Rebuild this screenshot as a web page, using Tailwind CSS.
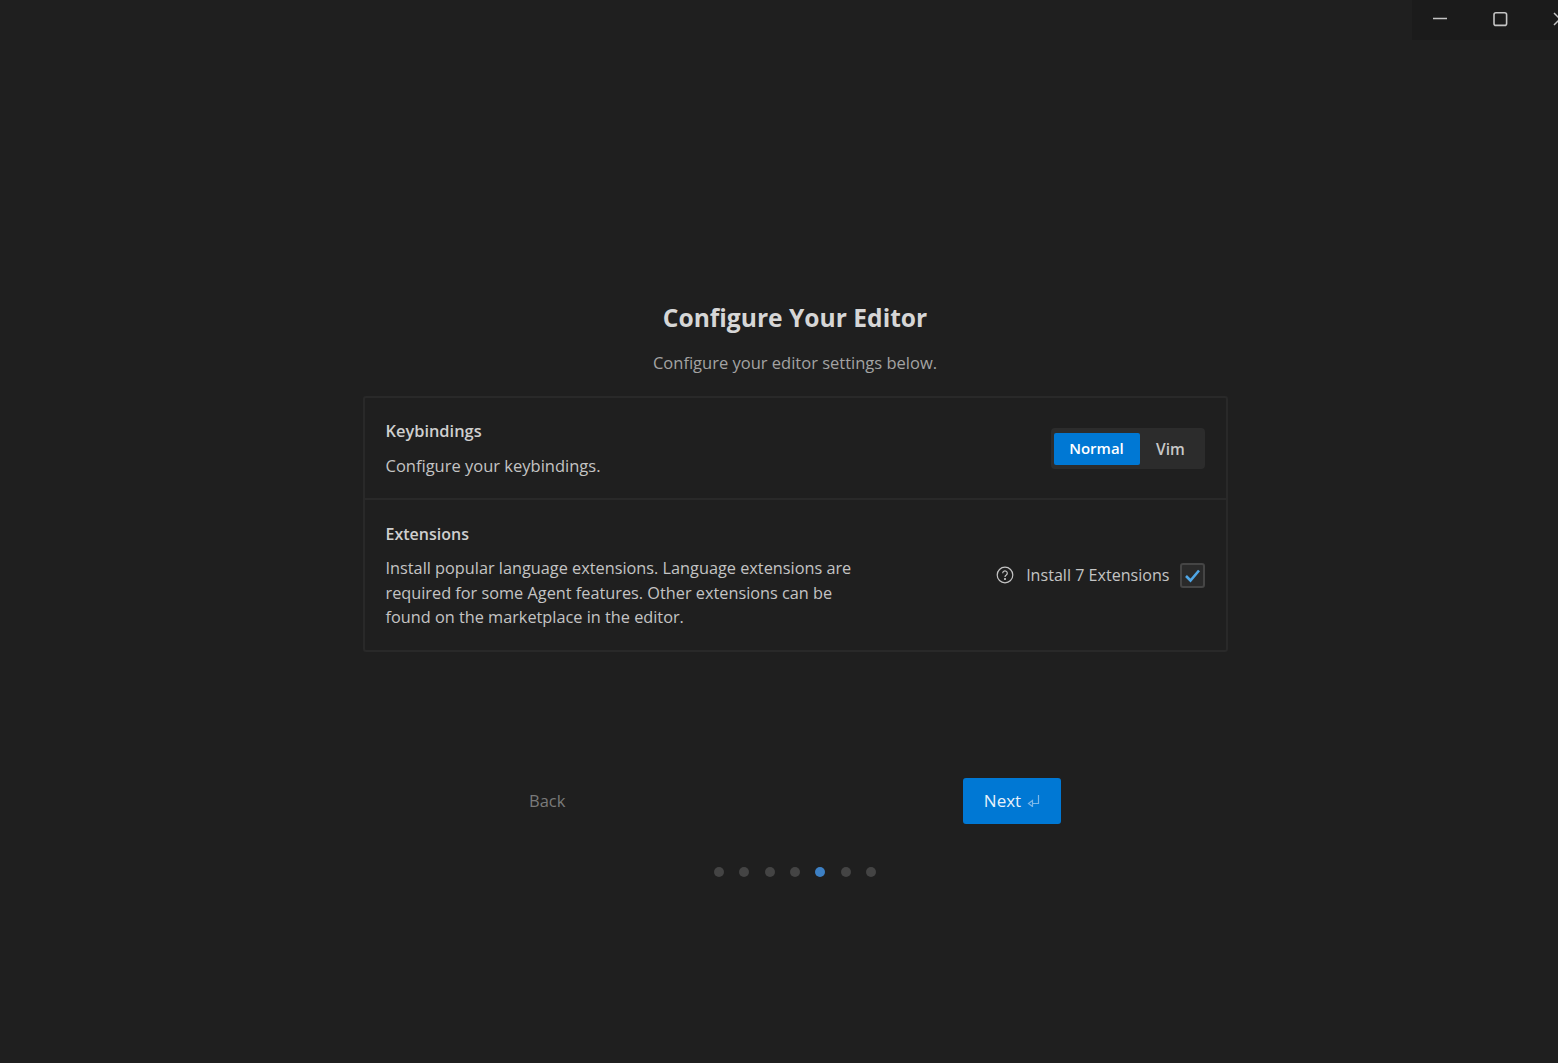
<!DOCTYPE html>
<html lang="en">
<head>
  <meta charset="UTF-8" />
  <meta name="viewport" content="width=device-width, initial-scale=1" />
  <title>Configure Your Editor</title>
  <script src="https://cdn.jsdelivr.net/npm/@tailwindcss/browser@4"></script>
</head>
<body class="relative h-[1063px] overflow-hidden bg-[#1f1f1f] font-['Open_Sans',sans-serif] text-[#cccccc]">
  <!-- Window controls -->
  <div class="absolute top-0 right-0 flex h-[40px] w-[146px] bg-[#1b1b1b] overflow-hidden">
    <svg class="absolute left-[20px] top-[11px]" width="16" height="16" viewBox="0 0 16 16" fill="none" stroke="#c4c4c4" stroke-width="1.5"><path d="M1 7.5h14"/></svg>
    <svg class="absolute left-[80px] top-[11px]" width="16" height="16" viewBox="0 0 16 16" fill="none" stroke="#c4c4c4" stroke-width="1.6"><rect x="2" y="1.8" width="12.6" height="12.6" rx="2"/></svg>
    <svg class="absolute left-[140px] top-[11px]" width="16" height="16" viewBox="0 0 16 16" fill="none" stroke="#c4c4c4" stroke-width="1.5"><path d="M2 2l12 12M14 2L2 14"/></svg>
  </div>

  <main class="flex w-[1590px] flex-col items-center pt-[300px]">
    <h1 class="text-[24.6px] leading-[36px] font-bold text-[#d6d6d6]">Configure Your Editor</h1>
    <p class="mt-[17px] text-[16.5px] leading-[20px] text-[#a3a3a3]">Configure your editor settings below.</p>

    <!-- Settings card -->
    <section class="mt-[23px] w-[865px] rounded-[3px] border-2 border-[#292929]">
      <div class="flex h-[102px] items-center justify-between border-b-2 border-[#292929] px-[21px] pt-[1px]">
        <div>
          <h2 class="text-[16.4px] leading-[22px] font-semibold text-[#cfcfcf]">Keybindings</h2>
          <p class="mt-[12px] text-[16.5px] leading-[24px] text-[#c4c4c4]">Configure your keybindings.</p>
        </div>
        <div class="flex h-[41px] w-[154px] items-center rounded-[4px] bg-[#2c2c2c] pl-[3px]">
          <button class="h-[32px] w-[86px] rounded-[2px] bg-[#0078d4] text-[15px] font-semibold text-white">Normal</button>
          <button class="h-[32px] w-[60px] pt-[2px] pl-[2px] text-[15.5px] font-semibold text-[#c8c8c8]">Vim</button>
        </div>
      </div>
      <div class="flex h-[150px] items-center justify-between px-[21px] pt-[3px]">
        <div>
          <h2 class="text-[16px] leading-[22px] font-semibold text-[#cfcfcf]">Extensions</h2>
          <p class="mt-[11px] w-[490px] text-[16.3px] leading-[24.5px] text-[#c4c4c4]">Install popular language extensions. Language extensions are required for some Agent features. Other extensions can be found on the marketplace in the editor.</p>
        </div>
        <div class="mb-[4px] flex items-center text-[#c4c4c4]">
          <svg width="18" height="18" viewBox="0 0 18 18" fill="none" stroke="#c4c4c4" stroke-width="1.2"><circle cx="9" cy="9" r="7.8"/><path d="M6.7 7.2a2.3 2.3 0 1 1 3.6 1.9c-.8.5-1.3 1-1.3 2"/><circle cx="9" cy="13" r=".5" fill="#c4c4c4"/></svg>
          <span class="ml-[12px] text-[16.1px] leading-[24px]">Install 7 Extensions</span>
          <span class="mt-[1px] ml-[10px] flex h-[25px] w-[25px] items-center justify-center rounded-[3px] border-2 border-[#454545] bg-[#2a2a2a]">
            <svg width="17" height="17" viewBox="0 0 17 17" fill="none" stroke="#4fa6e6" stroke-width="2.6"><path d="M2 9l4.5 4.5L15 3.5"/></svg>
          </span>
        </div>
      </div>
    </section>

    <!-- Navigation -->
    <div class="mt-[126px] flex w-[532px] items-center justify-between">
      <button class="text-[16.5px] text-[#7a7a7a]">Back</button>
      <button class="flex h-[46px] w-[98px] items-center justify-center gap-[6px] rounded-[3px] bg-[#0078d4] text-[17px] font-medium text-[#e8f2fb]">
        Next
        <svg class="-mt-[2px]" width="13" height="13" viewBox="0 0 13 13" fill="none" stroke="#7db8e8" stroke-width="1.2"><path d="M11.5 1v8.5H5.5M5.5 6.5L1.5 9.5l4 3z"/></svg>
      </button>
    </div>

    <!-- Step dots -->
    <div class="mt-[43px] flex gap-[15.4px]">
      <span class="size-[10px] rounded-full bg-[#444444]"></span>
      <span class="size-[10px] rounded-full bg-[#444444]"></span>
      <span class="size-[10px] rounded-full bg-[#444444]"></span>
      <span class="size-[10px] rounded-full bg-[#444444]"></span>
      <span class="size-[10px] rounded-full bg-[#3d80c4]"></span>
      <span class="size-[10px] rounded-full bg-[#444444]"></span>
      <span class="size-[10px] rounded-full bg-[#444444]"></span>
    </div>
  </main>
</body>
</html>
